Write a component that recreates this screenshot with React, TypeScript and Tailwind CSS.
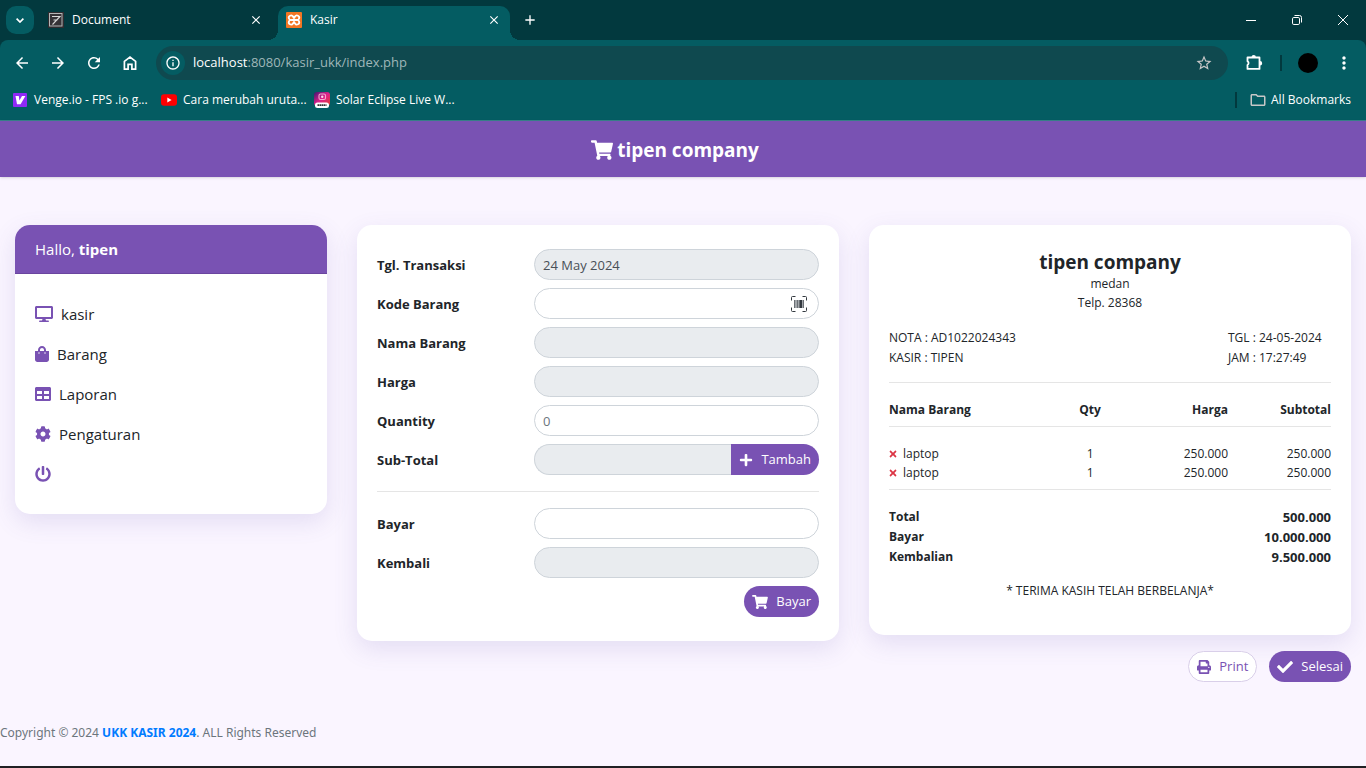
import { ReactNode } from 'react';
import {
  FaCheck,
  FaCog,
  FaDesktop,
  FaPlus,
  FaPowerOff,
  FaPrint,
  FaShoppingBag,
  FaShoppingCart,
  FaTable,
  FaTimes,
} from 'react-icons/fa';
import {
  MdArrowBack,
  MdArrowForward,
  MdClose,
  MdInfoOutline,
  MdMoreVert,
  MdOutlineFolder,
  MdRefresh,
  MdStarBorder,
  MdAdd,
} from 'react-icons/md';

const items = [
  { id: 1, name: 'laptop', qty: 1, price: '250.000', subtotal: '250.000' },
  { id: 2, name: 'laptop', qty: 1, price: '250.000', subtotal: '250.000' },
];

const totals = [
  { label: 'Total', value: '500.000' },
  { label: 'Bayar', value: '10.000.000' },
  { label: 'Kembalian', value: '9.500.000' },
];

const menu = [
  { label: 'kasir', icon: <FaDesktop className="h-4 w-[18px]" /> },
  { label: 'Barang', icon: <FaShoppingBag className="h-4 w-[14px]" /> },
  { label: 'Laporan', icon: <FaTable className="size-4" /> },
  { label: 'Pengaturan', icon: <FaCog className="size-4" /> },
];

function DocumentFavicon() {
  return (
    <svg viewBox="0 0 16 16" className="size-4 shrink-0" aria-hidden="true">
      <rect width="16" height="16" fill="#2f2c30" />
      <rect x="1.5" y="1.5" width="12.5" height="12.5" fill="#353236" stroke="#b5b5b5" />
      <path d="M4 4.5h8L4.5 12.5M5.5 8h4" fill="none" stroke="#d8d8d8" strokeWidth="1.1" />
    </svg>
  );
}

function XamppFavicon() {
  return (
    <svg viewBox="0 0 16 16" className="size-4 shrink-0" aria-hidden="true">
      <rect width="16" height="16" rx="1" fill="#f37623" />
      <path
        d="M5.600 8A2.300 2.300 0 1 1 7 4.500L9 6.200M10.400 8A2.300 2.300 0 1 0 9 4.500L7 6.200M5.600 8A2.300 2.300 0 1 0 7 11.500L9 9.800M10.400 8A2.300 2.300 0 1 1 9 11.500L7 9.800M5.600 8h4.800"
        fill="none"
        stroke="#fff"
        strokeWidth="1.8"
        strokeLinejoin="round"
      />
    </svg>
  );
}

function VengeIcon() {
  return (
    <svg viewBox="0 0 16 16" className="size-4 shrink-0" aria-hidden="true">
      <rect x="1" y="1" width="14" height="14" rx="1" fill="#9029f5" />
      <path d="M3.5 4H6.8l.6 4.6L10 4h3.4L8.6 12.3H5z" fill="#fff" />
    </svg>
  );
}

function YoutubeIcon() {
  return (
    <svg viewBox="0 0 16 16" className="size-4 shrink-0" aria-hidden="true">
      <rect y="2.3" width="16" height="11.4" rx="3" fill="#f00" />
      <path d="M6.3 5.6v4.8L10.6 8z" fill="#fff" />
    </svg>
  );
}

function EclipseIcon() {
  return (
    <svg viewBox="0 0 16 16" className="size-4 shrink-0" aria-hidden="true">
      <defs>
        <linearGradient id="eclipse" x1="0" y1="0" x2="1" y2="1">
          <stop offset="0" stopColor="#3b1670" />
          <stop offset="0.5" stopColor="#e0218a" />
          <stop offset="1" stopColor="#e0402c" />
        </linearGradient>
      </defs>
      <rect width="16" height="14" rx="3" fill="url(#eclipse)" />
      <rect x="5" y="2" width="6.5" height="5.5" rx="1.5" fill="none" stroke="#f7a8d0" strokeWidth="1.1" />
      <circle cx="8.2" cy="4.8" r="1.2" fill="#ffd9ea" />
      <rect x="1" y="10.5" width="14" height="5.5" rx="2.5" fill="#fff" />
      <path d="M3.5 13.2h9" stroke="#333" strokeWidth="1.8" strokeDasharray="1.6 .4" />
    </svg>
  );
}

function BarcodeIcon() {
  return (
    <svg viewBox="0 0 16 16" className="size-4" aria-hidden="true">
      <path
        d="M.5 4.5v-3a1 1 0 0 1 1-1h3M11.5.5h3a1 1 0 0 1 1 1v3M15.5 11.5v3a1 1 0 0 1-1 1h-3M4.5 15.5h-3a1 1 0 0 1-1-1v-3"
        fill="none"
        stroke="#343a40"
      />
      <path d="M3 4h1v8H3zM6 4h1v8H6zM8 4h1v8H8zM12 4h1v8h-1z" fill="#6b7075" />
      <path d="M4 4h2v8H4zM7 4h1v8H7zM11 4h1v8h-1z" fill="#a3a7ab" />
      <path d="M9 4h2v8H9z" fill="#343a40" />
    </svg>
  );
}

function HomeIcon() {
  return (
    <svg viewBox="0 0 20 20" className="size-5" fill="none" stroke="currentColor" strokeWidth="1.7" aria-hidden="true">
      <path d="M4.4 16.1V8.3L10 4l5.6 4.3v7.8h-3.7v-4.8H8.1v4.8z" />
    </svg>
  );
}

function ExtensionIcon() {
  return (
    <svg viewBox="0 0 20 20" className="size-5" aria-hidden="true">
      <path
        d="M3.5 4.5h12v11.4h-12v-3.9a2.2 2.2 0 0 0 0-3.8z"
        fill="none"
        stroke="currentColor"
        strokeWidth="1.8"
        strokeLinejoin="round"
      />
      <path d="M7.5 4.2a2.2 2.2 0 0 1 4.4 0zM16 8a2.2 2.2 0 0 1 0 4.4z" fill="currentColor" />
    </svg>
  );
}

function Tab({ title, icon, active }: { title: string; icon: ReactNode; active?: boolean }) {
  return (
    <div
      className={
        active
          ? 'relative flex h-[34px] w-[232px] items-center rounded-t-[10px] bg-[#045c62] px-2 pb-1.5 text-white'
          : 'mr-1.5 flex h-[34px] w-[232px] items-center px-2 pb-1.5 text-white'
      }
    >
      {active && (
        <>
          <span className="absolute bottom-0 -left-2.5 size-2.5 bg-[radial-gradient(circle_at_0_0,transparent_10px,#045c62_10px)]" />
          <span className="absolute -right-2.5 bottom-0 size-2.5 bg-[radial-gradient(circle_at_100%_0,transparent_10px,#045c62_10px)]" />
        </>
      )}
      {icon}
      <span className="ml-2 flex-1">{title}</span>
      <button type="button" aria-label={`Close ${title}`} className="flex size-4 items-center justify-center">
        <MdClose className="size-3.5" />
      </button>
    </div>
  );
}

function BrowserChrome() {
  return (
    <header className="bg-[#02393e] text-xs text-white">
      <div className="flex h-10 items-end justify-between">
        <div className="flex items-end">
          <button
            type="button"
            aria-label="Search tabs"
            className="mb-1.5 ml-1.5 flex size-7 items-center justify-center rounded-[10px] bg-[#045c62]"
          >
            <svg viewBox="0 0 8 5" className="h-[5px] w-2" fill="none" stroke="currentColor" strokeWidth="1.7">
              <path d="M.6.7L4 4 7.4.7" />
            </svg>
          </button>
          <div className="ml-1.5 flex">
            <Tab title="Document" icon={<DocumentFavicon />} />
            <Tab title="Kasir" icon={<XamppFavicon />} active />
          </div>
          <button type="button" aria-label="New tab" className="mb-2.5 ml-2.5 flex size-5 items-center justify-center">
            <MdAdd className="size-4" />
          </button>
        </div>
        <div className="flex h-10">
          <button type="button" aria-label="Minimize" className="flex w-[46px] items-center justify-center">
            <svg viewBox="0 0 10 10" className="size-2.5" stroke="#fff">
              <path d="M0 5.5h10" />
            </svg>
          </button>
          <button type="button" aria-label="Restore" className="flex w-[46px] items-center justify-center">
            <svg viewBox="0 0 10 10" className="size-2.5" fill="none" stroke="#fff">
              <rect x=".5" y="2.5" width="7" height="7" rx="1.3" />
              <path d="M2.5.5h5a2 2 0 0 1 2 2v5" />
            </svg>
          </button>
          <button type="button" aria-label="Close window" className="flex w-[46px] items-center justify-center">
            <svg viewBox="0 0 10 10" className="size-2.5" stroke="#fff">
              <path d="M0 0l10 10M10 0L0 10" />
            </svg>
          </button>
        </div>
      </div>

      <div className="rounded-t-lg border-b border-[#37808a] bg-[#045c62]">
        <div className="flex h-[46px] items-center">
          <div className="flex items-center gap-4 pr-4 pl-3">
            <button type="button" aria-label="Back"><MdArrowBack className="size-5 p-px" /></button>
            <button type="button" aria-label="Forward"><MdArrowForward className="size-5 p-px" /></button>
            <button type="button" aria-label="Reload"><MdRefresh className="size-5 p-px" /></button>
            <button type="button" aria-label="Home"><HomeIcon /></button>
          </div>
          <div className="flex h-[34px] flex-1 items-center rounded-full bg-[#0f494f] pr-[15px] pl-[5px]">
            <span className="flex size-6 items-center justify-center rounded-full bg-[#045c62]">
              <MdInfoOutline className="size-4" />
            </span>
            <label htmlFor="address" className="ml-2 text-[13px]">localhost</label>
            <input
              id="address"
              type="text"
              defaultValue=":8080/kasir_ukk/index.php"
              className="min-w-0 flex-1 bg-transparent text-[13px] text-[#9fb7b9] outline-none"
            />
            <button type="button" aria-label="Bookmark this page" className="text-[#c7c7c7]">
              <MdStarBorder className="size-[18px]" />
            </button>
          </div>
          <div className="flex items-center pr-3 pl-4">
            <button type="button" aria-label="Extensions"><ExtensionIcon /></button>
            <span className="ml-4 h-4 w-0.5 bg-[#02393e]" />
            <span className="ml-4 size-5 rounded-full bg-black" />
            <button type="button" aria-label="Menu" className="ml-4"><MdMoreVert className="size-5" /></button>
          </div>
        </div>
        <nav className="flex h-[34px] items-center justify-between pr-[15px] pb-1.5 pl-3 whitespace-nowrap">
          <div className="flex">
            <a href="#venge" className="flex w-[149px] items-center gap-1.5"><VengeIcon />Venge.io - FPS .io g...</a>
            <a href="#video" className="flex w-[153px] items-center gap-1.5"><YoutubeIcon />Cara merubah uruta...</a>
            <a href="#eclipse" className="flex items-center gap-1.5"><EclipseIcon />Solar Eclipse Live W...</a>
          </div>
          <div className="flex items-center">
            <span className="mr-3 h-4 w-0.5 bg-[#02393e]" />
            <a href="#bookmarks" className="flex items-center gap-1">
              <MdOutlineFolder className="size-[18px] text-[#c7c7c7]" />
              All Bookmarks
            </a>
          </div>
        </nav>
      </div>
    </header>
  );
}

const card = 'rounded-[15px] bg-white shadow-[0_8px_24px_rgba(90,80,170,0.14)]';
const pill = 'flex h-[31px] items-center gap-2 bg-[#7952b3] px-2 text-white';

interface FieldProps {
  id: string;
  label: string;
  value?: string;
  placeholder?: string;
  readOnly?: boolean;
  addon?: ReactNode;
  joined?: boolean;
}

function Field({ id, label, value, placeholder, readOnly, addon, joined }: FieldProps) {
  return (
    <div className="grid grid-cols-[157px_1fr] items-center">
      <label htmlFor={id} className="pt-0.5 font-bold">{label}</label>
      <div className="relative flex">
        <input
          id={id}
          type="text"
          defaultValue={value}
          placeholder={placeholder}
          readOnly={readOnly}
          className={
            'h-[31px] w-full min-w-0 border border-[#ced4da] px-2 text-[#495057] outline-none placeholder:text-[#6c757d] ' +
            (readOnly ? 'bg-[#e9ecef] ' : 'bg-white ') +
            (joined ? 'rounded-l-full border-r-0' : 'rounded-full')
          }
        />
        {addon}
      </div>
    </div>
  );
}

function Sidebar() {
  return (
    <aside className={'self-start overflow-hidden ' + card}>
      <div className="border-b border-[#6a459f] bg-[#7952b3] px-5 py-3 text-[15px] leading-6 text-white">
        Hallo, <b>tipen</b>
      </div>
      <nav className="flex flex-col gap-4 px-5 py-7 text-[15px] leading-6 text-[#212529]">
        {menu.map((m) => (
          <a key={m.label} href={'#' + m.label} className="flex items-center gap-2">
            <span className="text-[#7952b3]">{m.icon}</span>
            {m.label}
          </a>
        ))}
        <a href="#keluar" aria-label="Keluar" className="flex h-6 items-center text-[#7952b3]">
          <FaPowerOff className="size-4" />
        </a>
      </nav>
    </aside>
  );
}

function TransactionForm() {
  return (
    <form className={'self-start px-5 py-6 ' + card}>
      <div className="flex flex-col gap-2">
        <Field id="tanggal" label="Tgl. Transaksi" value="24 May 2024" readOnly />
        <Field
          id="kode"
          label="Kode Barang"
          addon={
            <button type="button" aria-label="Scan barcode" className="absolute inset-y-0 right-3 flex items-center">
              <BarcodeIcon />
            </button>
          }
        />
        <Field id="nama" label="Nama Barang" readOnly />
        <Field id="harga" label="Harga" readOnly />
        <Field id="quantity" label="Quantity" placeholder="0" />
        <Field
          id="subtotal"
          label="Sub-Total"
          readOnly
          joined
          addon={
            <button type="button" className={pill + ' rounded-r-full'}>
              <FaPlus className="size-3.5" />
              Tambah
            </button>
          }
        />
      </div>
      <hr className="my-4 border-black/10" />
      <div className="flex flex-col gap-2">
        <Field id="bayar" label="Bayar" />
        <Field id="kembali" label="Kembali" readOnly />
        <button type="button" className={pill + ' self-end rounded-full'}>
          <FaShoppingCart className="h-3.5 w-4" />
          Bayar
        </button>
      </div>
    </form>
  );
}

function Receipt() {
  return (
    <div>
      <section className={'px-5 pt-[25px] pb-[34px] text-xs leading-5 ' + card}>
        <div className="text-center leading-[19px]">
          <h2 className="text-[19px] leading-6 font-bold">tipen company</h2>
          <p>medan</p>
          <p>Telp. 28368</p>
        </div>
        <div className="mt-4 flex justify-between">
          <div>
            <p>NOTA : AD1022024343</p>
            <p>KASIR : TIPEN</p>
          </div>
          <div className="w-[103px]">
            <p>TGL : 24-05-2024</p>
            <p>JAM : 17:27:49</p>
          </div>
        </div>
        <hr className="mt-3.5 mb-4 border-black/10" />
        <table className="w-full table-fixed">
          <thead>
            <tr className="border-b border-black/10">
              <th className="w-[41%] pt-px pb-1.5 text-left">Nama Barang</th>
              <th className="w-[9%] pt-px pb-1.5 text-center">Qty</th>
              <th className="pt-px pb-1.5 text-right">Harga</th>
              <th className="w-[103px] pt-px pb-1.5 text-right">Subtotal</th>
            </tr>
          </thead>
          <tbody>
            {items.map((item) => (
              <tr key={item.id} className="leading-[19px] first:[&>td]:pt-[17px]">
                <td>
                  <span className="flex items-center gap-1.5">
                    <button type="button" aria-label="Hapus" className="text-[#dc3545]">
                      <FaTimes className="h-2.5 w-2" />
                    </button>
                    {item.name}
                  </span>
                </td>
                <td className="text-center">{item.qty}</td>
                <td className="text-right">{item.price}</td>
                <td className="text-right">{item.subtotal}</td>
              </tr>
            ))}
          </tbody>
        </table>
        <hr className="mt-[7px] mb-[17px] border-black/10" />
        <dl className="font-bold">
          {totals.map((t) => (
            <div key={t.label} className="flex justify-between">
              <dt>{t.label}</dt>
              <dd className="text-[13px]">{t.value}</dd>
            </div>
          ))}
        </dl>
        <p className="mt-3.5 text-center">* TERIMA KASIH TELAH BERBELANJA*</p>
      </section>
      <div className="mt-4 flex justify-end gap-3">
        <button
          type="button"
          className="flex h-[31px] items-center gap-2 rounded-full border border-[#d9cfe9] bg-white px-2 text-[#7952b3]"
        >
          <FaPrint className="size-3.5" />
          Print
        </button>
        <button type="button" className={pill + ' rounded-full'}>
          <FaCheck className="size-4" />
          Selesai
        </button>
      </div>
    </div>
  );
}

export default function App() {
  return (
    <div className="flex min-h-screen flex-col bg-[#faf5ff] font-['Open_Sans','Noto_Sans',sans-serif] text-[13px] text-[#212529]">
      <BrowserChrome />
      <div className="flex h-14 items-center justify-center gap-1 bg-[#7952b3] pt-0.5 pr-4 text-[19px] font-bold text-white shadow-sm">
        <FaShoppingCart className="h-5 w-[22px]" />
        <h1>tipen company</h1>
      </div>
      <main className="grid grid-cols-[312fr_482fr_482fr] gap-[30px] px-[15px] pt-12">
        <Sidebar />
        <TransactionForm />
        <Receipt />
      </main>
      <footer className="mt-[41px] font-['Noto_Sans',sans-serif] text-xs leading-5 text-[#6c757d]">
        Copyright © 2024{' '}
        <a href="#ukk" className="font-bold text-[#007bff]">UKK KASIR 2024</a>. ALL Rights Reserved
      </footer>
      <div className="mt-auto h-0.5 bg-[#202024]" />
    </div>
  );
}
